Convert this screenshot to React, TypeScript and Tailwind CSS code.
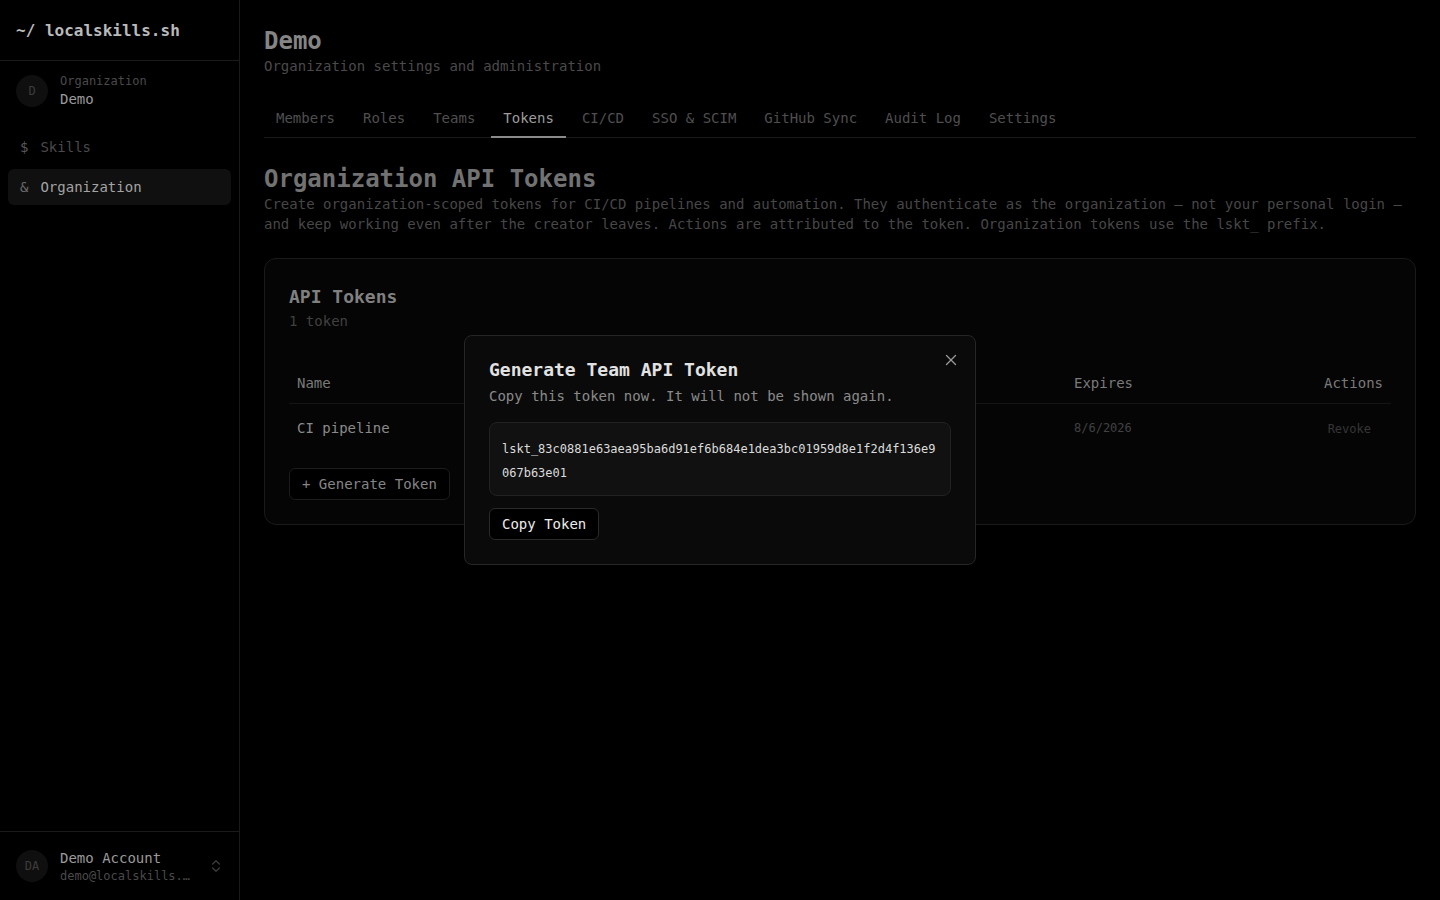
import { X, ChevronsUpDown } from "lucide-react";

const tabs = ["Members", "Roles", "Teams", "Tokens", "CI/CD", "SSO & SCIM", "GitHub Sync", "Audit Log", "Settings"];

const token = "lskt_83c0881e63aea95ba6d91ef6b684e1dea3bc01959d8e1f2d4f136e9067b63e01";

const Sidebar = () => {
  return (
    <aside className="w-60 h-screen shrink-0 flex flex-col border-r border-[#1a1a1a] bg-black">
      <div className="h-[61px] px-4 flex items-center border-b border-[#1a1a1a]">
        <span className="text-base font-bold text-[#bababa] leading-6 mt-0.5">~/ localskills.sh</span>
      </div>

      <div className="px-4 py-3 flex items-center gap-3">
        <div className="w-8 h-8 rounded-full bg-[#0f0f0f] flex items-center justify-center text-xs text-[#3c3c3c]">D</div>
        <div className="flex flex-col">
          <span className="text-xs leading-4 text-[#4a4a4a]">Organization</span>
          <span className="text-sm leading-5 font-medium text-[#9a9a9a]">Demo</span>
        </div>
      </div>

      <nav className="px-2 pt-2 flex flex-col gap-1">
        <div className="h-9 px-3 flex items-center gap-3 rounded-md text-sm">
          <span className="text-[#575757]">$</span>
          <span className="text-[#4a4a4a]">Skills</span>
        </div>
        <div className="h-9 px-3 flex items-center gap-3 rounded-md text-sm bg-[#101010]">
          <span className="text-[#6a6a6a]">&amp;</span>
          <span className="text-[#a3a3a3] font-medium">Organization</span>
        </div>
      </nav>

      <div className="mt-auto border-t border-[#1a1a1a] p-4 flex items-center gap-3">
        <div className="w-8 h-8 rounded-full bg-[#0f0f0f] flex items-center justify-center text-xs text-[#3c3c3c]">DA</div>
        <div className="flex flex-col min-w-0 flex-1">
          <span className="text-sm leading-5 font-medium text-[#9a9a9a]">Demo Account</span>
          <span className="text-xs leading-4 text-[#4a4a4a] truncate">demo@localskills.sh</span>
        </div>
        <ChevronsUpDown className="w-4 h-4 text-[#3a3a3a] mr-[-1px]" />
      </div>
    </aside>
  );
};

const TokensCard = () => {
  return (
    <div className="mt-6 rounded-xl border border-[#1a1a1a] bg-[#050505] p-6">
      <h3 className="text-lg leading-7 font-semibold text-[#808080]">API Tokens</h3>
      <p className="text-sm leading-5 text-[#404040]">1 token</p>

      <table className="mt-8 w-full table-fixed text-sm">
        <thead>
          <tr className="border-b border-[#151515]">
            <th className="w-[777px] h-10 px-2 text-left font-medium text-[#7a7a7a]">Name</th>
            <th className="w-[153px] h-10 px-2 text-left font-medium text-[#7a7a7a]">Expires</th>
            <th className="w-[172px] h-10 px-2 text-right font-medium text-[#7a7a7a]">Actions</th>
          </tr>
        </thead>
        <tbody>
          <tr>
            <td className="px-2 py-3.5 leading-5 font-medium text-[#8a8a8a]">CI pipeline</td>
            <td className="px-2 py-3.5 leading-5 text-xs text-[#424242]">8/6/2026</td>
            <td className="px-2 py-3.5 leading-5 text-right">
              <button className="px-3 text-xs text-[#363636]">Revoke</button>
            </td>
          </tr>
        </tbody>
      </table>

      <button className="mt-4 h-8 px-3 rounded-md border border-[#1c1c1c] bg-black text-sm text-[#858585]">
        + Generate Token
      </button>
    </div>
  );
};

const TokenDialog = () => {
  return (
    <div className="fixed inset-0 z-50 flex items-center justify-center">
      <div className="relative w-[512px] rounded-lg border border-[#262626] bg-[#0a0a0a] p-6">
        <button className="absolute top-[15px] right-[15px] text-[#9a9a9a]">
          <X className="w-[18px] h-[18px]" strokeWidth={1.75} />
        </button>
        <h2 className="text-lg leading-5 font-semibold text-[#e2e2e2]">Generate Team API Token</h2>
        <p className="mt-1.5 text-sm leading-5 text-[#8a8a8a]">Copy this token now. It will not be shown again.</p>

        <div className="mt-4 rounded-lg border border-[#222] bg-[#111111] px-3 pt-[14px] pb-[10px]">
          <p className="text-xs leading-6 text-[#dcdcdc] break-all">{token}</p>
        </div>

        <button className="mt-3 h-8 px-3 rounded-md border border-[#2a2a2a] bg-black text-sm font-medium text-[#ececec]">
          Copy Token
        </button>
      </div>
    </div>
  );
};

const App = () => {
  return (
    <div className="flex h-screen bg-black font-['DejaVu_Sans_Mono',monospace] overflow-hidden">
      <Sidebar />

      <main className="flex-1 px-6 pt-6">
        <h1 className="mt-0.5 text-2xl leading-[30px] font-semibold text-[#858585]">Demo</h1>
        <p className="text-sm leading-5 text-[#4a4a4a]">Organization settings and administration</p>

        <div className="mt-6 flex gap-1 border-b border-[#1a1a1a]">
          {tabs.map(tab => (
            <div
              key={tab}
              className={
                tab === "Tokens"
                  ? "px-3 py-2 text-sm leading-5 text-[#9c9c9c] border-b-2 border-[#8a8a8a] -mb-px"
                  : "px-3 py-2 text-sm leading-5 text-[#4f4f4f] border-b-2 border-transparent -mb-px"
              }
            >
              {tab}
            </div>
          ))}
        </div>

        <h2 className="mt-6 text-2xl leading-8 font-semibold text-[#727272] pt-px">Organization API Tokens</h2>
        <p className="-mt-px text-sm leading-5 text-[#474747]">
          Create organization-scoped tokens for CI/CD pipelines and automation. They authenticate as the organization — not your personal login — and keep working even after the creator leaves. Actions are attributed to the token. Organization tokens use the lskt_ prefix.
        </p>

        <TokensCard />
      </main>

      <TokenDialog />
    </div>
  );
};

export default App;
